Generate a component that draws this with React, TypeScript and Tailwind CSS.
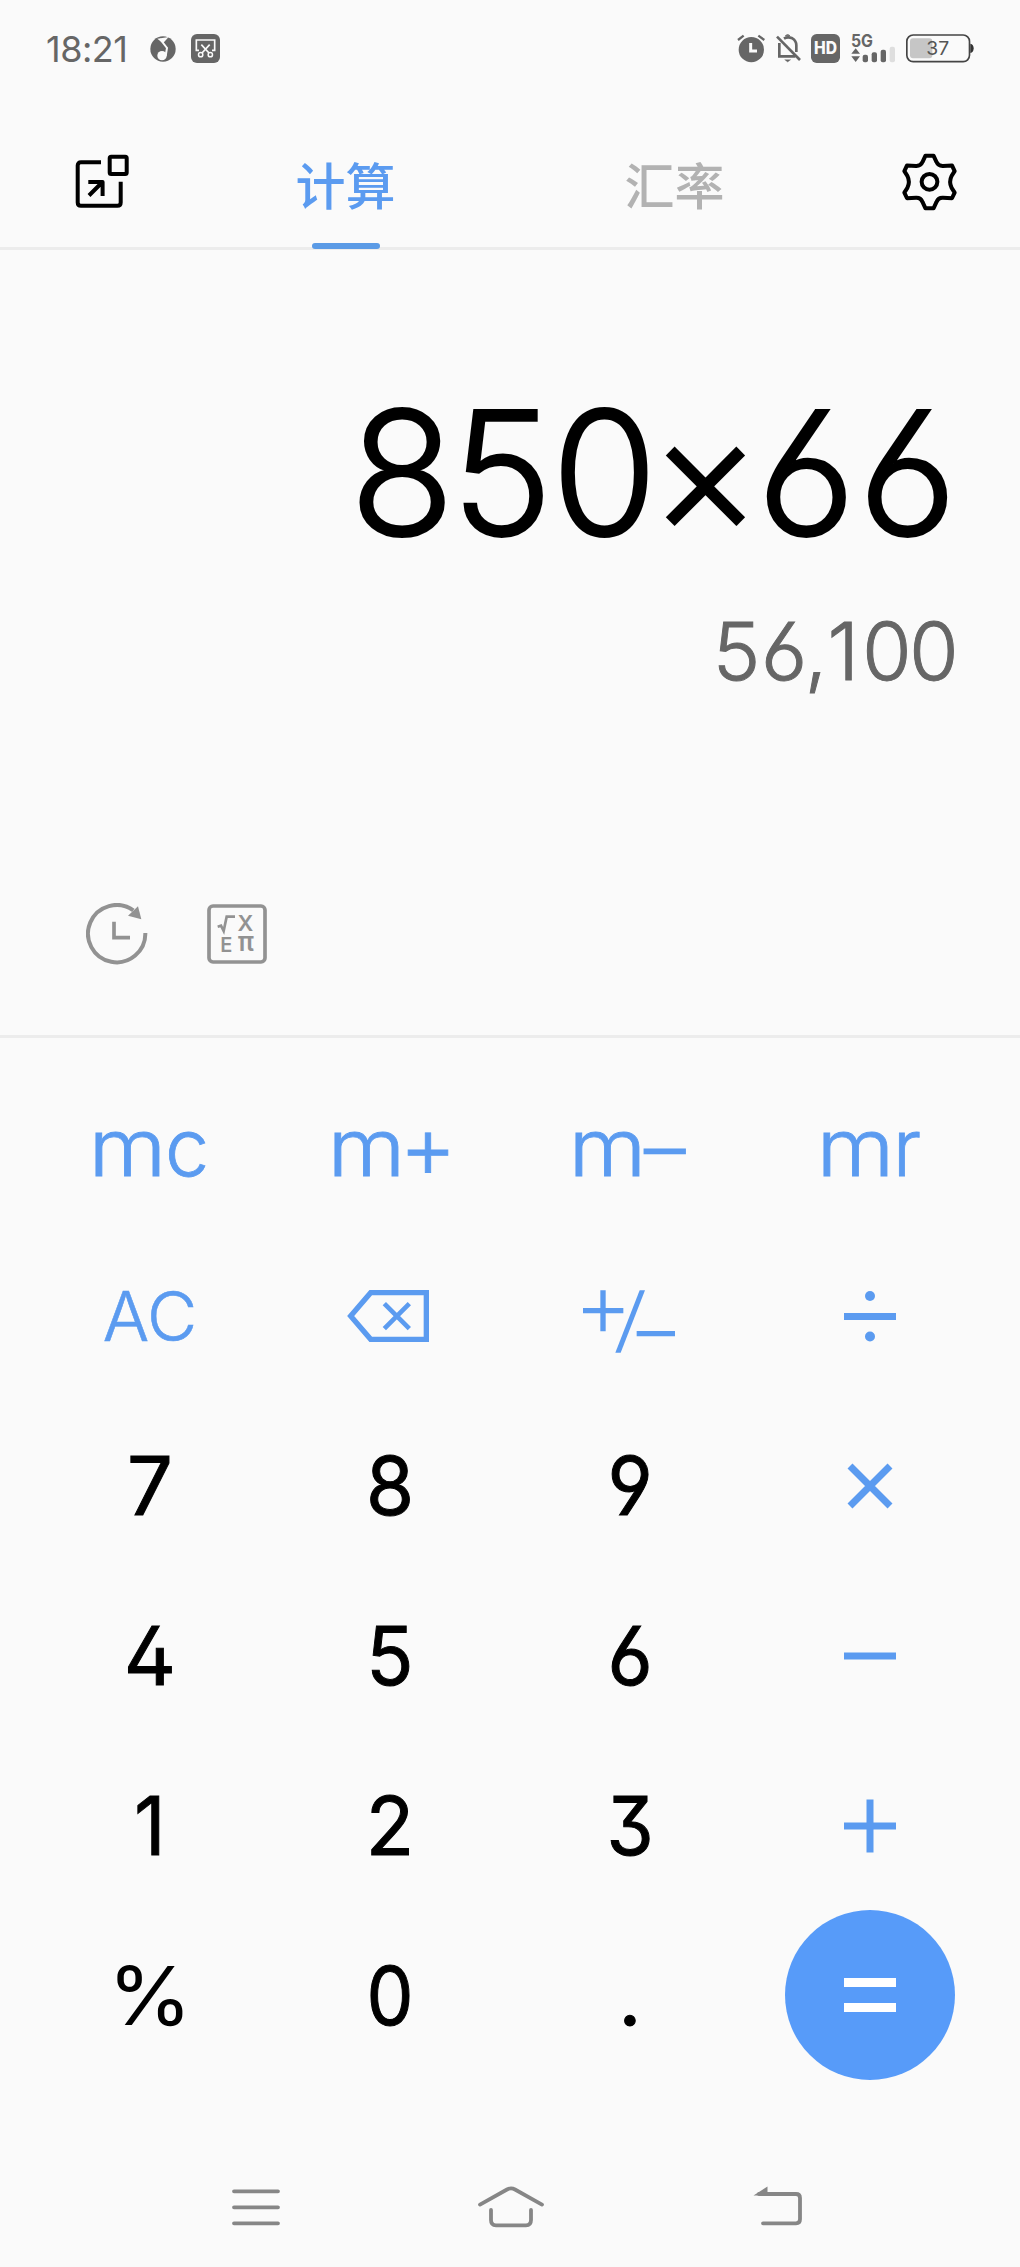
import React from "react";

interface KeyDef {
  id: string;
  label: React.ReactNode;
  className?: string;
}

const DIGIT = "text-[81px] font-normal text-black [-webkit-text-stroke:1px_currentColor]";
const MEMORY = "text-[79px] font-light text-[#5b9bf0] [-webkit-text-stroke:0.8px_currentColor]";
const CLEAR = "text-[69px] font-light text-[#5b9bf0] [-webkit-text-stroke:0.6px_currentColor]";

function MusicIcon() {
  return (
    <svg className="h-[26px] w-[26px]" viewBox="0 0 78 78">
      <circle cx="39" cy="39" r="38" fill="#666" />
      <path d="M30 9L51 36L47 60" fill="none" stroke="#fafafa" strokeWidth="6" />
      <path d="M22 8L56 3L39 22Z" fill="#fafafa" />
      <circle cx="36" cy="59" r="14" fill="#fafafa" />
    </svg>
  );
}

function ScissorsIcon() {
  return (
    <svg className="h-[29px] w-[29px]" viewBox="0 0 87 87" fill="none" stroke="#fafafa">
      <rect width="87" height="87" rx="18" fill="#666" stroke="none" />
      <path d="M24 49H16V18H71V49H63" strokeWidth="5" />
      <path d="M31 32L54 57M56 32L33 57" strokeWidth="5" />
      <circle cx="29" cy="62" r="6.5" strokeWidth="4.5" />
      <circle cx="58" cy="62" r="6.5" strokeWidth="4.5" />
    </svg>
  );
}

function AlarmIcon() {
  return (
    <svg className="h-[29px] w-[28px]" viewBox="0 0 84 87" fill="none">
      <circle cx="43" cy="47" r="38" fill="#666" />
      <path d="M3 18L20 5M64 5L82 18" stroke="#666" strokeWidth="7" />
      <path d="M41 27V51H60" stroke="#fafafa" strokeWidth="9" />
    </svg>
  );
}

function BellOffIcon() {
  return (
    <svg className="h-[29px] w-[25px]" viewBox="0 0 75 87" fill="none" stroke="#666" strokeWidth="8">
      <path d="M3 8L72 78" />
      <path d="M10 27V67H58M24 14Q35 7 49 13Q61 20 61 34V54" />
      <path d="M28 5Q35 -2 42 5Z" fill="#666" strokeWidth="2" />
      <path d="M26 77H44L35 84Z" fill="#666" strokeWidth="1" />
    </svg>
  );
}

function HdIcon() {
  return (
    <svg className="h-[29px] w-[29px]" viewBox="0 0 87 87">
      <rect width="87" height="87" rx="17" fill="#666" />
      <text
        x="43.5"
        y="61"
        textAnchor="middle"
        textLength="69"
        lengthAdjust="spacingAndGlyphs"
        fontSize="50"
        fontWeight="800"
        fill="#fafafa"
      >
        HD
      </text>
    </svg>
  );
}

function SignalIcon() {
  return (
    <svg className="h-[29px] w-[45px] overflow-visible" viewBox="0 0 135 87" fill="#666">
      <text x="0" y="39" fontSize="51" fontWeight="700" textLength="66" lengthAdjust="spacingAndGlyphs">
        5G
      </text>
      <path d="M1 59L14 43L27 59ZM1 67H27L14 84Z" />
      <rect x="35" y="62" width="16" height="23" rx="6" />
      <rect x="62" y="55" width="16" height="30" rx="6" />
      <rect x="89" y="47" width="16" height="38" rx="6" />
      <rect x="116" y="38" width="16" height="47" rx="6" fill="#dedede" />
    </svg>
  );
}

function BatteryIcon() {
  return (
    <svg className="h-[29px] w-[68px]" viewBox="0 0 204 87">
      <rect x="2.5" y="3" width="188" height="80" rx="19" fill="none" stroke="#444" strokeWidth="5" />
      <path d="M193 29Q203 31 203 43T193 57Z" fill="#333" />
      <rect x="12" y="13" width="67" height="60" rx="9" fill="#c6c6c6" />
      <text x="95" y="64" textAnchor="middle" fontSize="58" fill="#555">
        37
      </text>
    </svg>
  );
}

function StatusBar() {
  return (
    <div className="flex h-[97px] items-center pr-[46px] pl-[46px]">
      <span className="w-[104px] text-[36px] leading-none tracking-[-0.5px] text-[#666] [font-feature-settings:'ss01']">
        18:21
      </span>
      <MusicIcon />
      <div className="ml-[15px] flex">
        <ScissorsIcon />
      </div>
      <div className="ml-auto flex items-center">
        <AlarmIcon />
        <div className="ml-[11px]">
          <BellOffIcon />
        </div>
        <div className="ml-[10px]">
          <HdIcon />
        </div>
        <div className="ml-[11px]">
          <SignalIcon />
        </div>
        <div className="ml-[10px]">
          <BatteryIcon />
        </div>
      </div>
    </div>
  );
}

function FloatWindowIcon() {
  return (
    <svg
      className="h-[55px] w-[55px]"
      viewBox="0 0 55 55"
      fill="none"
      stroke="#000"
      strokeWidth="4"
      strokeLinejoin="round"
    >
      <path d="M26 8.3H6Q2.7 8.3 2.7 11.6V48.4Q2.7 51.7 6 51.7H42.4Q45.7 51.7 45.7 48.4V27.7" />
      <rect x="34.7" y="2.8" width="17" height="17.2" rx="1.5" />
      <path d="M14 41.5L27 28.5M13.3 28H27.6V42" />
    </svg>
  );
}

function SettingsIcon() {
  return (
    <svg
      className="h-[58px] w-[55px]"
      viewBox="0 0 164 173"
      fill="none"
      stroke="#000"
      strokeWidth="12"
      strokeLinejoin="round"
    >
      <path d="M70 8H94L103 27Q108 39 122 38.5L149 37L157 54L148 68Q139 86 148 104L157 118L149 135L122 133.5Q108 133 103 146L94 165H70L61 146Q56 133 42 133.5L15 135L7 118L16 104Q25 86 16 68L7 54L15 37L42 38.5Q56 39 61 27Z" />
      <circle cx="82" cy="86" r="23.5" />
    </svg>
  );
}

function Header() {
  return (
    <div className="flex h-[153px] items-start border-b-[3px] border-[#ececec] pr-[63px] pl-[75px]">
      <div className="mt-[57px]">
        <FloatWindowIcon />
      </div>
      <div className="relative ml-[164px] h-[153px] w-[103px] text-center">
        <div className="mt-[66px] text-[50px] leading-[49px] font-medium text-[#5b9bf0]">计算</div>
        <div className="absolute bottom-[1px] left-[18px] h-[6px] w-[68px] rounded-full bg-[#5b9be6]" />
      </div>
      <div className="mt-[66px] ml-[226px] w-[103px] text-center text-[50px] leading-[49px] font-medium text-[#b2b2b2]">
        汇率
      </div>
      <div className="mt-[56px] ml-auto">
        <SettingsIcon />
      </div>
    </div>
  );
}

function HistoryIcon() {
  return (
    <svg className="h-[62px] w-[62px]" viewBox="0 0 186 186" fill="none" stroke="#929292" strokeWidth="12">
      <path d="M178 90A86 86 0 1 1 142 22" />
      <path d="M84 56V104H132" strokeWidth="11" />
      <path d="M156 10L166 49L126 38Z" fill="#929292" stroke="none" />
    </svg>
  );
}

function FormulaIcon() {
  return (
    <svg className="h-[60px] w-[60px]" viewBox="0 0 180 180" fill="#929292">
      <rect x="6" y="6" width="168" height="168" rx="12" fill="none" stroke="#929292" strokeWidth="11" />
      <path d="M32 68L42 65L50 81L59 38H84" fill="none" stroke="#929292" strokeWidth="8" />
      <text x="115" y="82" textAnchor="middle" fontSize="66" fontWeight="600">
        X
      </text>
      <text x="58" y="143" textAnchor="middle" fontSize="60" fontWeight="600">
        E
      </text>
      <text x="117" y="142" textAnchor="middle" fontSize="78" fontWeight="600">
        π
      </text>
    </svg>
  );
}

function Display() {
  return (
    <div className="flex h-[788px] flex-col border-b-[3px] border-[#ececec] pt-[136px]">
      <div className="flex h-[172px] justify-end pr-[67px]">
        <span className="text-[172px] leading-none font-light tracking-[-10.2px] whitespace-nowrap text-black [font-feature-settings:'ss01','tnum'] [-webkit-text-stroke:2px_currentColor]">
          850×66
        </span>
      </div>
      <div className="mt-[53px] flex h-[80px] justify-end pr-[65px]">
        <span className="text-[80px] leading-none font-light tracking-[-4.8px] whitespace-nowrap text-[#666] [font-feature-settings:'ss01','tnum'] [-webkit-text-stroke:1px_currentColor]">
          56<span className="tracking-[-8px]">,</span>
          {/* proportional "1", without the foot of the tabular one */}
          <span className="inline-block w-[42.5px] pr-[2px] text-right tracking-normal [font-feature-settings:'ss01']">
            1
          </span>
          00
        </span>
      </div>
      <div className="mt-[212px] flex items-center gap-[59px] pl-[86px]">
        <HistoryIcon />
        <FormulaIcon />
      </div>
    </div>
  );
}

function BackspaceIcon() {
  return (
    <svg className="mr-[4px] h-[52px] w-[82px]" viewBox="0 0 246 156" fill="none" stroke="#5b9bf0">
      <path d="M11 78L71 8H238V148H71Z" strokeWidth="16" />
      <path d="M112 41L187 116M187 41L112 116" strokeWidth="14" />
    </svg>
  );
}

function PlusMinusIcon() {
  return (
    <svg
      className="mt-[10px] mr-[2px] h-[63px] w-[92px]"
      viewBox="0 0 276 189"
      fill="none"
      stroke="#5b9bf0"
      strokeWidth="16"
    >
      <path d="M60 1V124M0 62H121M161 131H276" />
      <path d="M97 188H113L186 1H170Z" fill="#5b9bf0" stroke="none" />
    </svg>
  );
}

function OperatorIcon({ children }: { children: React.ReactNode }) {
  return (
    <svg className="h-[54px] w-[54px]" viewBox="0 0 54 54" fill="none" stroke="#5b9bf0" strokeWidth="7">
      {children}
    </svg>
  );
}

// wide "m" shared by all memory keys
function MemoryLabel({ children }: { children: React.ReactNode }) {
  return (
    <span className="flex items-center pl-[2px] whitespace-nowrap">
      <span className="mr-[3px] inline-block scale-x-[1.13]">m</span>
      {children}
    </span>
  );
}

const memoryKeys: KeyDef[] = [
  { id: "mc", label: <MemoryLabel>c</MemoryLabel>, className: MEMORY },
  {
    id: "m+",
    label: (
      <MemoryLabel>
        <span className="-mt-[2px] -mr-[7px] -ml-[5px] text-[88px]">+</span>
      </MemoryLabel>
    ),
    className: MEMORY,
  },
  {
    id: "m-",
    label: (
      <MemoryLabel>
        <span className="mr-[4px] inline-block scale-x-[1.05]">–</span>
      </MemoryLabel>
    ),
    className: MEMORY,
  },
  { id: "mr", label: <MemoryLabel>r</MemoryLabel>, className: MEMORY },
];

const keys: KeyDef[] = [
  { id: "ac", label: "AC", className: CLEAR },
  { id: "back", label: <BackspaceIcon /> },
  { id: "sign", label: <PlusMinusIcon /> },
  {
    id: "divide",
    label: (
      <OperatorIcon>
        <path d="M1 27.5H53" />
        <circle cx="27" cy="7" r="5" fill="#5b9bf0" stroke="none" />
        <circle cx="27" cy="47.5" r="5" fill="#5b9bf0" stroke="none" />
      </OperatorIcon>
    ),
  },
  { id: "7", label: "7", className: DIGIT },
  { id: "8", label: "8", className: `${DIGIT} scale-x-[0.96]` },
  { id: "9", label: "9", className: `${DIGIT} scale-x-[0.96]` },
  {
    id: "multiply",
    label: (
      <OperatorIcon>
        <path d="M7 7L47 47M47 7L7 47" />
      </OperatorIcon>
    ),
  },
  { id: "4", label: "4", className: DIGIT },
  { id: "5", label: "5", className: `${DIGIT} scale-x-[0.96]` },
  { id: "6", label: "6", className: `${DIGIT} scale-x-[0.96]` },
  {
    id: "minus",
    label: (
      <OperatorIcon>
        <path d="M1 27H53" />
      </OperatorIcon>
    ),
  },
  { id: "1", label: "1", className: `${DIGIT} scale-x-[0.95]` },
  { id: "2", label: "2", className: `${DIGIT} scale-x-[0.98]` },
  { id: "3", label: "3", className: `${DIGIT} scale-x-[0.94]` },
  {
    id: "plus",
    label: (
      <OperatorIcon>
        <path d="M1 27H53M27 0.5V53.5" />
      </OperatorIcon>
    ),
  },
  { id: "percent", label: "%", className: "text-[81px] text-black scale-x-[1.06]" },
  { id: "0", label: "0", className: `${DIGIT} scale-x-[0.92]` },
  { id: "dot", label: ".", className: DIGIT },
  {
    id: "equals",
    label: (
      <span className="-mt-[2px] flex h-[170px] w-[170px] shrink-0 flex-col items-center justify-center gap-[16px] rounded-full bg-[#579bf9]">
        <span className="h-[9px] w-[52px] bg-white" />
        <span className="h-[9px] w-[52px] bg-white" />
      </span>
    ),
  },
];

function Key({ label, className = "" }: KeyDef) {
  return (
    <button className={`flex items-center justify-center leading-none [font-feature-settings:'ss01'] ${className}`}>
      {label}
    </button>
  );
}

function Keypad() {
  return (
    <div className="px-[30px]">
      <div className="grid h-[193px] grid-cols-4 pt-[25px]">
        {memoryKeys.map((k) => (
          <Key key={k.id} id={k.id} label={k.label} className={k.className} />
        ))}
      </div>
      <div className="grid auto-rows-[170px] grid-cols-4">
        {keys.map((k) => (
          <Key key={k.id} id={k.id} label={k.label} className={k.className} />
        ))}
      </div>
    </div>
  );
}

function NavBar() {
  return (
    <div className="flex pt-[103px] pl-[231px]" aria-label="navigation">
      <svg className="h-[44px] w-[50px]" viewBox="0 0 50 44" stroke="#868686" strokeWidth="3.8" strokeLinecap="round">
        <path d="M3 7.3H47M3 23.3H47M3 39.3H47" />
      </svg>
      <svg
        className="ml-[196px] h-[44px] w-[68px]"
        viewBox="0 0 68 44"
        fill="none"
        stroke="#868686"
        strokeWidth="3.8"
        strokeLinecap="round"
      >
        <path d="M3 20.6L30 5.5Q34 3.3 38 5.5L65 20.6" />
        <path d="M14 26V36Q14 41.3 19 41.3H49Q54 41.3 54 36V26" />
      </svg>
      <svg
        className="ml-[208px] h-[44px] w-[52px]"
        viewBox="0 0 52 44"
        fill="none"
        stroke="#868686"
        strokeWidth="3.8"
        strokeLinecap="round"
      >
        <path d="M6 10H43Q47 10 47 14V35.3Q47 39.3 43 39.3H10" />
        <path d="M0.5 11.6L14.5 2.5V11.6Z" fill="#868686" stroke="none" />
      </svg>
    </div>
  );
}

export default function App() {
  return (
    <div className="h-[2267px] w-[1020px] overflow-hidden bg-[#fafafa] font-['Inter','Noto_Sans_CJK_SC',sans-serif]">
      <StatusBar />
      <Header />
      <Display />
      <Keypad />
      <NavBar />
    </div>
  );
}
